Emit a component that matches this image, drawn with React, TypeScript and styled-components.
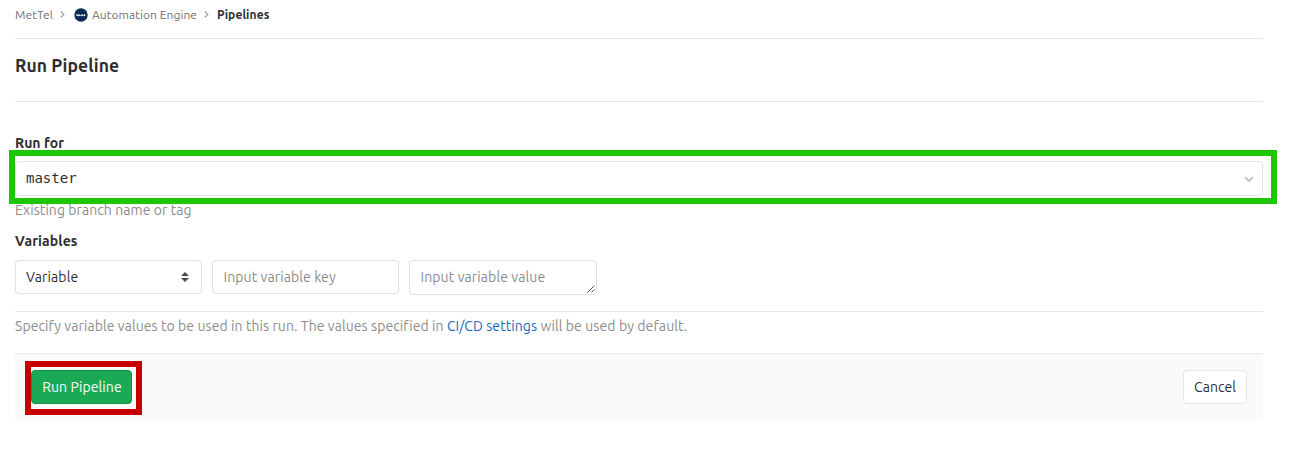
import React from "react";
import styled, { createGlobalStyle } from "styled-components";

const GlobalStyle = createGlobalStyle`
  *, *::before, *::after { box-sizing: border-box; }
  body {
    margin: 0;
    background: #fff;
    color: #2e2e2e;
    font-family: Ubuntu, "Noto Sans", sans-serif;
    font-size: 14px;
    line-height: 20px;
  }
`;

const Page = styled.main`
  width: 1263px;
  padding-left: 15px;
`;

const Text = styled.span<{ $track?: number }>`
  white-space: nowrap;
  letter-spacing: ${(p) => p.$track ?? 0}px;
`;

const Breadcrumbs = styled.nav`
  display: flex;
  align-items: center;
  height: 39px;
  padding-bottom: 9px;
  border-bottom: 1px solid #e5e5e5;
  font-size: 12px;
  color: #707070;
`;

const Crumb = styled.div<{ $width: number; $current?: boolean }>`
  display: flex;
  align-items: center;
  width: ${(p) => p.$width}px;
  font-weight: ${(p) => (p.$current ? 700 : 400)};
  color: ${(p) => (p.$current ? "#2e2e2e" : "#707070")};
`;

const Separator = styled.svg<{ $gap: number }>`
  width: 5px;
  height: 7px;
  margin-right: ${(p) => p.$gap}px;
  flex: none;
`;

const Avatar = styled.svg`
  width: 14px;
  height: 14px;
  margin-right: 4px;
  flex: none;
`;

const Title = styled.h1`
  margin: 0;
  height: 63px;
  padding-top: 15px;
  border-bottom: 1px solid #e5e5e5;
  font-size: 17.5px;
  line-height: 24px;
  font-weight: 700;
`;

const Label = styled.div`
  height: 20px;
  font-weight: 700;
`;

const RefField = styled.section`
  padding-top: 31px;
`;

const Highlight = styled.div<{ $color: string; $inset: string }>`
  position: relative;
  &::after {
    content: "";
    position: absolute;
    inset: ${(p) => p.$inset};
    border: 6px solid ${(p) => p.$color};
    pointer-events: none;
  }
`;

const RefControl = styled.div`
  padding: 8px 0 4px;
`;

const RefSelect = styled.button`
  display: flex;
  align-items: center;
  justify-content: space-between;
  width: 100%;
  height: 35px;
  padding: 0 8px 1px 10px;
  border: 1px solid #e5e5e5;
  border-radius: 4px;
  background: #fff;
  color: #2e2e2e;
  font: 14px/20px "DejaVu Sans Mono", monospace;
`;

const Chevron = styled.svg`
  width: 10px;
  height: 7px;
  margin-top: 2px;
`;

const Hint = styled.p`
  margin: 0;
  height: 20px;
  color: #8c8c8c;
`;

const Variables = styled.section`
  padding-top: 11px;
`;

const VariableRow = styled.div`
  display: flex;
  align-items: flex-start;
  gap: 10px;
  height: 51px;
  margin-top: 9px;
`;

const Control = styled.div<{ $width: number; $height?: number; $muted?: boolean }>`
  position: relative;
  display: flex;
  justify-content: space-between;
  width: ${(p) => p.$width}px;
  height: ${(p) => p.$height ?? 34}px;
  padding: 6px 12px 0 ${(p) => (p.$muted ? 10.5 : 10)}px;
  border: 1px solid #dfdfdf;
  border-radius: 4px;
  background: #fff;
  color: ${(p) => (p.$muted ? "#8c8c8c" : "#2e2e2e")};
`;

const Arrows = styled.svg`
  width: 8px;
  height: 10px;
  margin-top: 5px;
`;

const ResizeGrip = styled.svg`
  position: absolute;
  right: 1px;
  bottom: 1px;
  width: 8px;
  height: 8px;
`;

const VariableHint = styled.div`
  height: 42px;
  padding-top: 4px;
  border-top: 1px solid #e5e5e5;
  color: #8c8c8c;
`;

const Link = styled.a`
  color: #1b69b6;
  text-decoration: none;
`;

const Actions = styled.footer`
  display: flex;
  justify-content: space-between;
  height: 67px;
  padding: 16px;
  border-top: 1px solid #e5e5e5;
  background: #fafafa;
`;

const Button = styled.button<{ $width: number; $primary?: boolean }>`
  display: flex;
  justify-content: center;
  width: ${(p) => p.$width}px;
  height: 34px;
  padding: 6px 0 0 ${(p) => (p.$primary ? 1 : 0)}px;
  border: 1px solid ${(p) => (p.$primary ? "#168f48" : "#e5e5e5")};
  border-radius: 4px;
  background: ${(p) => (p.$primary ? "#1aaa55" : "#fff")};
  color: ${(p) => (p.$primary ? "#fff" : "#2e2e2e")};
  font: inherit;
`;

const CrumbSeparator = ({ gap }: { gap: number }) => (
  <Separator $gap={gap} viewBox="0 0 5 7">
    <path d="M1 .8 3.8 3.5 1 6.2" fill="none" stroke="#a0a0a0" strokeWidth="1.2" />
  </Separator>
);

export default function App() {
  return (
    <>
      <GlobalStyle />
      <Page>
        <Breadcrumbs>
          <Crumb $width={45}><Text $track={0.05}>MetTel</Text></Crumb>
          <CrumbSeparator gap={9} />
          <Crumb $width={130}>
            <Avatar viewBox="0 0 14 14">
              <circle cx="7" cy="7" r="6.7" fill="#0b2a55" />
              <path d="M2.5 7.5h9" fill="none" stroke="#a9b6c8" strokeWidth="1.2" />
              <path d="M3 6v2M5 6v2M8 6v2M10.5 6v2" fill="none" stroke="#f2f5f8" strokeWidth="1" />
            </Avatar>
            <Text $track={0.06}>Automation Engine</Text>
          </Crumb>
          <CrumbSeparator gap={8} />
          <Crumb $width={60} $current><Text $track={0.09}>Pipelines</Text></Crumb>
        </Breadcrumbs>
        <Title><Text $track={0.1}>Run Pipeline</Text></Title>
        <RefField>
          <Label><Text $track={0.05}>Run for</Text></Label>
          <RefControl>
            <Highlight $color="#1ec600" $inset="-11px -14px -8px -6px">
              <RefSelect>
                <span>master</span>
                <Chevron viewBox="0 0 10 7">
                  <path d="M1.2 1.3 5 5l3.8-3.7" fill="none" stroke="#c4c4c4" strokeWidth="2" />
                </Chevron>
              </RefSelect>
            </Highlight>
          </RefControl>
          <Hint><Text $track={0.07}>Existing branch name or tag</Text></Hint>
        </RefField>
        <Variables>
          <Label><Text $track={0.12}>Variables</Text></Label>
          <VariableRow>
            <Control $width={187}>
              <Text $track={0.12}>Variable</Text>
              <Arrows viewBox="0 0 8 10">
                <path d="M4 0 8 4H0zM4 10l4-4H0z" fill="#4a4a4a" />
              </Arrows>
            </Control>
            <Control $width={187} $muted><Text $track={0.1}>Input variable key</Text></Control>
            <Control $width={188} $height={35} $muted>
              <Text $track={0.11}>Input variable value</Text>
              <ResizeGrip viewBox="0 0 8 8">
                <path d="M.5 7.5l7-7M4.5 7.5l3-3" stroke="#555" strokeWidth="1" />
              </ResizeGrip>
            </Control>
          </VariableRow>
          <VariableHint>
            <Text $track={0.078}>Specify variable values to be used in this run. The values specified in </Text>
            <Link><Text $track={0.08}>CI/CD settings</Text></Link>
            <Text $track={0.1}> will be used by default.</Text>
          </VariableHint>
        </Variables>
        <Actions>
          <Highlight $color="#c60000" $inset="-9px -10px -11px -6px">
            <Button $width={101} $primary><Text $track={0.1}>Run Pipeline</Text></Button>
          </Highlight>
          <Button $width={64}><Text $track={0.05}>Cancel</Text></Button>
        </Actions>
      </Page>
    </>
  );
}
